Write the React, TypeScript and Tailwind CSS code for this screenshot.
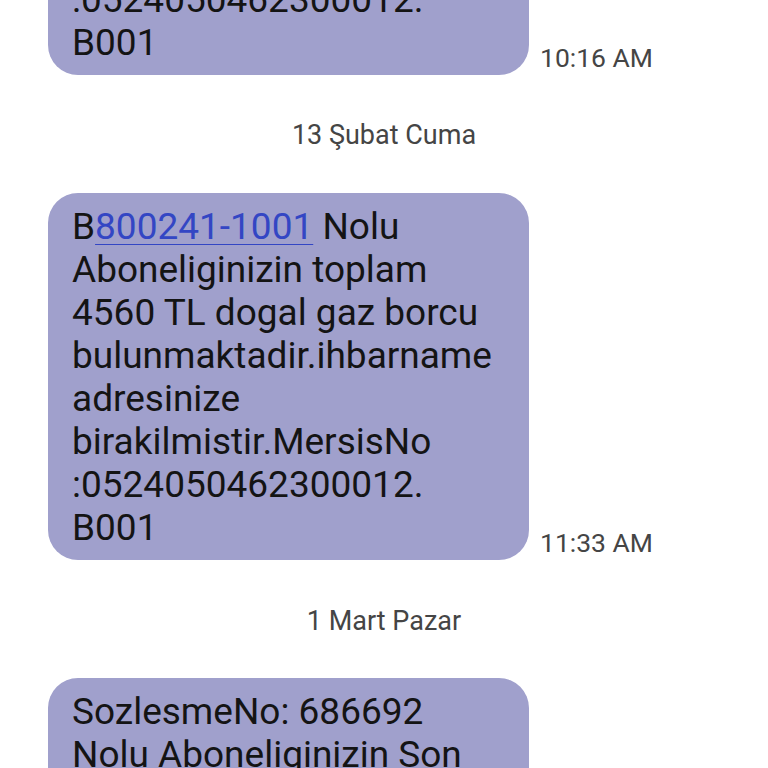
const mersisMessage = (
  <>
    B
    <span className="text-[#3346c4] underline decoration-1 underline-offset-[5px]">800241-1001</span> Nolu
    Aboneliginizin toplam 4560 TL dogal gaz borcu bulunmaktadir.ihbarname adresinize
    birakilmistir.MersisNo :0524050462300012. B001
  </>
);

function Bubble({ children, time }: { children: React.ReactNode; time?: string }) {
  return (
    <div className="flex items-end gap-[11px] pl-12">
      <div className="w-[481px] shrink-0 rounded-[30px] bg-[#a0a0cc] px-6 pt-[12px] pb-[11px] text-[37px] leading-[43px] text-[#141414]">
        {children}
      </div>
      {time && <span className="pb-[1px] text-[26.5px] leading-8 text-[#454545]">{time}</span>}
    </div>
  );
}

function DateLabel({ label }: { label: string }) {
  return <p className="text-center text-[27px] leading-8 text-[#454545]">{label}</p>;
}

export default function App() {
  return (
    <div className="h-[768px] overflow-hidden bg-white font-['Roboto',sans-serif]">
      <div className="-mt-[292px] flex flex-col">
        <Bubble time="10:16 AM">{mersisMessage}</Bubble>
        <div className="pt-[44px] pb-[42px]">
          <DateLabel label="13 Şubat Cuma" />
        </div>
        <Bubble time="11:33 AM">{mersisMessage}</Bubble>
        <div className="pt-[45px] pb-[41px]">
          <DateLabel label="1 Mart Pazar" />
        </div>
        <Bubble>
          SozlesmeNo: 686692 Nolu Aboneliginizin Son Odeme Tarihi Gecmis Borcu Bulunmaktadir.
        </Bubble>
      </div>
    </div>
  );
}
